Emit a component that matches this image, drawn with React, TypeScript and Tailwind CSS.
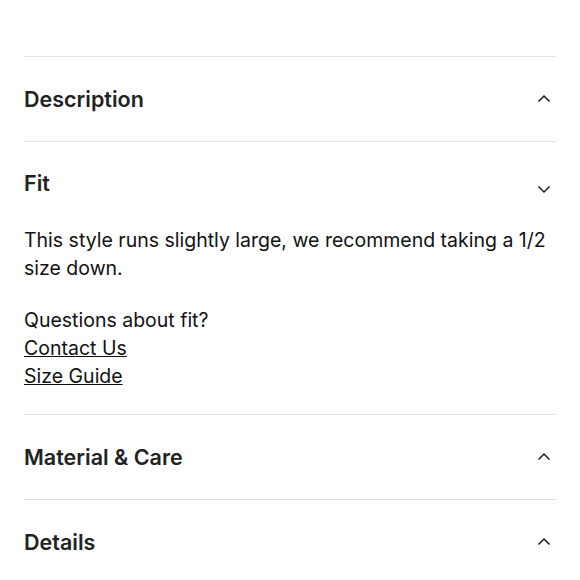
import React, { useState } from 'react';

const Chevron = ({ up }: { up: boolean }) => (
    <svg width="16" height="16" viewBox="0 0 16 16" fill="none" className="shrink-0">
        {up ? (
            <path d="M2.5 10.5L8 5L13.5 10.5" stroke="#1a1a1a" strokeWidth="1.5" />
        ) : (
            <path d="M2.5 5.5L8 11L13.5 5.5" stroke="#1a1a1a" strokeWidth="1.5" />
        )}
    </svg>
);

const Section = ({ title, open, onToggle, children }: { title: string; open: boolean; onToggle: () => void; children?: React.ReactNode }) => (
    <div className="border-b border-[#e2e2e2]">
        {open ? (
            <button type="button" onClick={onToggle} className="w-full flex justify-between items-start pt-[27px] pb-[29px] text-left">
                <span className="text-[21.5px] leading-[28px] font-semibold text-[#222]">{title}</span>
                <span className="mt-[12px] mr-[4px]"><Chevron up={false} /></span>
            </button>
        ) : (
            <button type="button" onClick={onToggle} className="w-full h-[84px] flex justify-between items-center text-left">
                <span className="text-[21.5px] font-semibold text-[#222]">{title}</span>
                <span className="mr-[4px]"><Chevron up={true} /></span>
            </button>
        )}
        {open && <div className="pb-[24px]">{children}</div>}
    </div>
);

export default function App() {
    const [open, setOpen] = useState<string | null>('Fit');
    const toggle = (name: string) => setOpen(open === name ? null : name);

    return (
        <div className="bg-white min-h-screen px-6 pt-[56px]" style={{ fontFamily: 'Inter, "Liberation Sans", sans-serif' }}>
            <div className="border-t border-[#e2e2e2]">
                <Section title="Description" open={open === 'Description'} onToggle={() => toggle('Description')} />
                <Section title="Fit" open={open === 'Fit'} onToggle={() => toggle('Fit')}>
                    <div className="text-[19.5px] leading-[28px] text-[#111]">
                        <p>This style runs slightly large, we recommend taking a 1/2 size down.</p>
                        <p className="mt-[24px]">Questions about fit?</p>
                        <a href="#" className="block underline w-fit">Contact Us</a>
                        <a href="#" className="block underline w-fit">Size Guide</a>
                    </div>
                </Section>
                <Section title="Material & Care" open={open === 'Material & Care'} onToggle={() => toggle('Material & Care')} />
                <Section title="Details" open={open === 'Details'} onToggle={() => toggle('Details')} />
            </div>
        </div>
    );
}
